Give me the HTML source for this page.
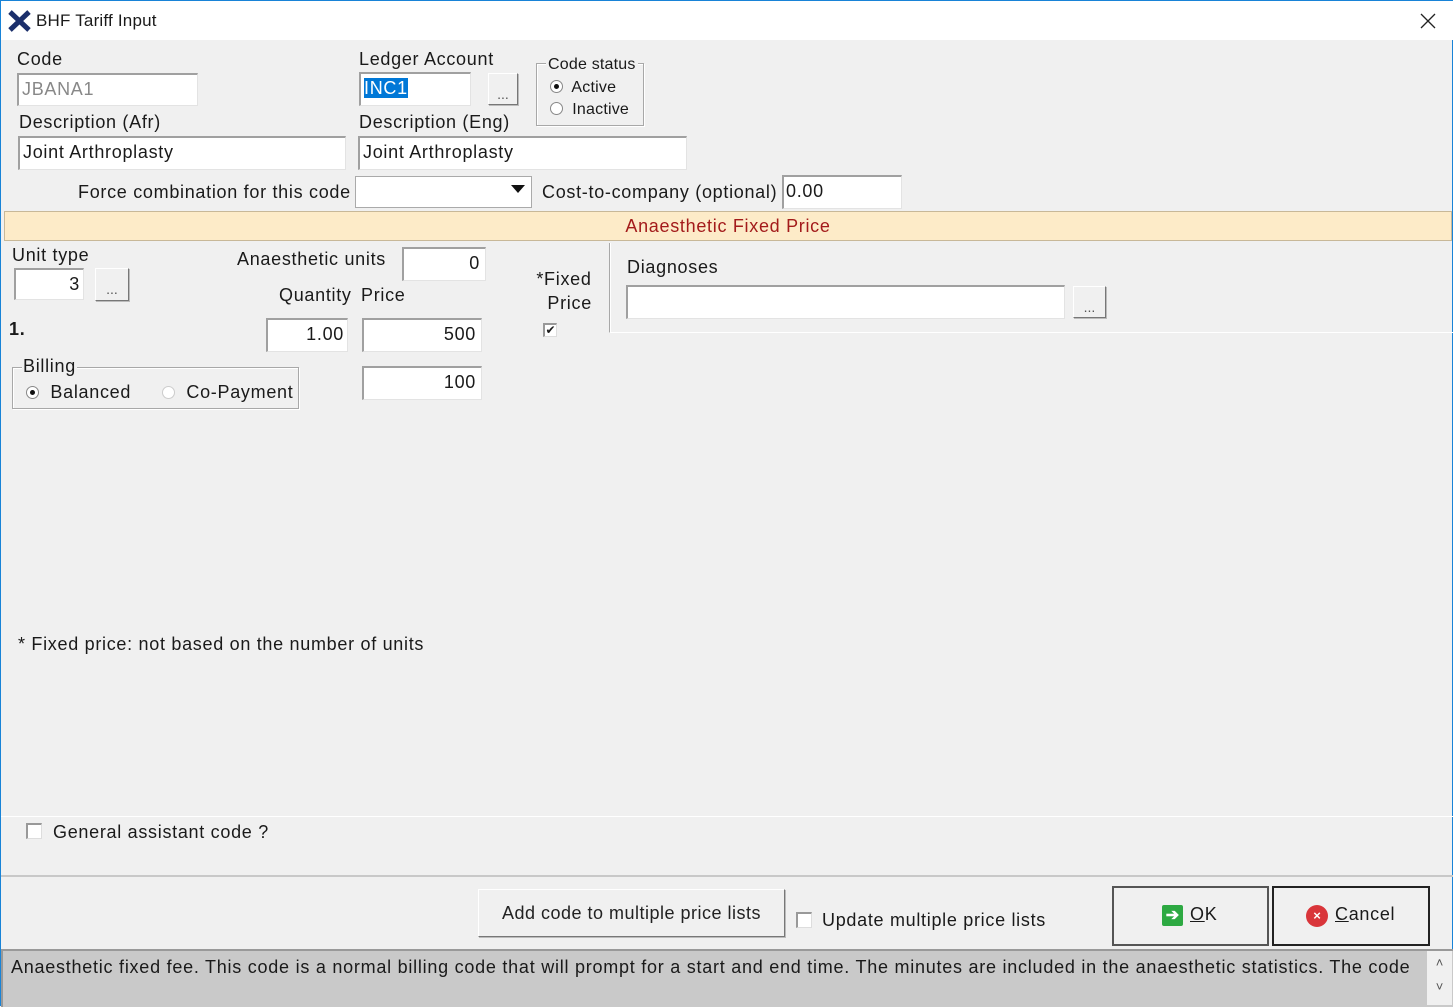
<!DOCTYPE html>
<html><head><meta charset="utf-8"><style>
*{box-sizing:border-box;margin:0;padding:0}
body{width:1453px;height:1006px;background:#f0f0f0;font-family:"Liberation Sans",sans-serif;font-size:18px;letter-spacing:0.7px;color:#1a1a1a;position:relative;overflow:hidden;border:1px solid #1883d7}
.a{position:absolute;white-space:nowrap}
.in{position:absolute;background:#fff;border-top:2px solid #a0a0a0;border-left:2px solid #a0a0a0;border-bottom:1px solid #e3e3e3;border-right:1px solid #e3e3e3;padding:0 3px;line-height:28px}
.r{text-align:right}
.btn{position:absolute;background:#f0f0f0;border:1px solid #fff;border-right-color:#777;border-bottom-color:#777;box-shadow:1px 1px 0 #bbb;text-align:center;color:#555;font-size:14px;letter-spacing:0}
.rad{display:inline-block;width:13px;height:13px;border-radius:50%;border:1px solid #888;background:#fff;vertical-align:-1px;position:relative}
.rad.on:after{content:"";position:absolute;left:3px;top:3px;width:5px;height:5px;border-radius:50%;background:#111}
.cb{position:absolute;width:16px;height:16px;background:#fff;border-top:2px solid #999;border-left:2px solid #999;border-right:1px solid #ddd;border-bottom:1px solid #ddd}
.grp{position:absolute;border:1px solid #a8a8a8;box-shadow:inset 1px 1px 0 #fff,1px 1px 0 #fff}
</style></head><body>
<div class="a" style="left:0;top:0;width:1453px;height:39px;background:#fff"></div>
<svg class="a" style="left:7px;top:9px" width="24" height="22" viewBox="0 0 24 22"><path d="M2 2 L21 20 M21 2 L2 20" stroke="#1b2f6b" stroke-width="5"/></svg>
<div class="a" style="left:35px;top:10px;font-size:17px;letter-spacing:0.2px">BHF Tariff Input</div>
<svg class="a" style="left:1419px;top:12px" width="16" height="16"><path d="M1 1L15 15M15 1L1 15" stroke="#222" stroke-width="1.3"/></svg>

<div class="a" style="left:16px;top:48px">Code</div>
<div class="in" style="left:16px;top:72px;width:181px;height:33px;color:#888">JBANA1</div>
<div class="a" style="left:358px;top:48px">Ledger Account</div>
<div class="in" style="left:358px;top:71px;width:112px;height:34px"><span style="background:#0078d7;color:#fff">INC1</span></div>
<div class="btn" style="left:487px;top:72px;width:30px;height:32px;line-height:40px">...</div>
<div class="grp" style="left:535px;top:62px;width:108px;height:63px"></div>
<div class="a" style="left:545px;top:55px;font-size:16px;letter-spacing:0.2px;background:#f0f0f0;padding:0 2px">Code status</div>
<div class="a" style="left:549px;top:78px;font-size:16px;letter-spacing:0.2px"><span class="rad on"></span>&nbsp; Active</div>
<div class="a" style="left:549px;top:100px;font-size:16px;letter-spacing:0.2px"><span class="rad"></span>&nbsp; Inactive</div>

<div class="a" style="left:18px;top:111px">Description (Afr)</div>
<div class="in" style="left:17px;top:135px;width:328px;height:34px">Joint Arthroplasty</div>
<div class="a" style="left:358px;top:111px">Description (Eng)</div>
<div class="in" style="left:357px;top:135px;width:329px;height:34px">Joint Arthroplasty</div>

<div class="a" style="left:77px;top:181px">Force combination for this code</div>
<div class="a" style="left:354px;top:175px;width:177px;height:32px;background:#fff;border:1px solid #aaa"></div>
<div class="a" style="left:510px;top:184px;width:0;height:0;border-left:7px solid transparent;border-right:7px solid transparent;border-top:8px solid #111"></div>
<div class="a" style="left:541px;top:181px">Cost-to-company (optional)</div>
<div class="in" style="left:781px;top:174px;width:120px;height:34px;line-height:28px;padding-left:2px">0.00</div>

<div class="a" style="left:3px;top:210px;width:1448px;height:30px;background:#fdebc8;border:1px solid #c8b898;color:#a31b1b;text-align:center;line-height:28px">Anaesthetic Fixed Price</div>

<div class="a" style="left:11px;top:244px">Unit type</div>
<div class="in r" style="left:13px;top:267px;width:70px;height:32px">3</div>
<div class="btn" style="left:94px;top:267px;width:34px;height:33px;line-height:40px">...</div>
<div class="a" style="left:236px;top:248px">Anaesthetic units</div>
<div class="in r" style="left:401px;top:246px;width:84px;height:34px;padding-right:5px">0</div>
<div class="a" style="left:278px;top:284px">Quantity</div>
<div class="a" style="left:360px;top:284px">Price</div>
<div class="a" style="left:8px;top:318px;font-weight:bold">1.</div>
<div class="in r" style="left:265px;top:317px;width:82px;height:34px">1.00</div>
<div class="in r" style="left:361px;top:317px;width:120px;height:34px;padding-right:5px">500</div>
<div class="in r" style="left:361px;top:365px;width:120px;height:34px;padding-right:5px">100</div>
<div class="a" style="left:535px;top:266px;text-align:center;line-height:24px">*Fixed<br>&nbsp;&nbsp;Price</div>
<div class="cb" style="left:542px;top:322px;width:14px;height:14px;font-size:12px;line-height:11px;text-align:center;letter-spacing:0">✔</div>

<div class="grp" style="left:11px;top:366px;width:287px;height:42px"></div>
<div class="a" style="left:21px;top:355px;background:#f0f0f0;padding:0 1px">Billing</div>
<div class="a" style="left:25px;top:381px"><span class="rad on"></span>&nbsp; Balanced</div>
<div class="a" style="left:161px;top:381px"><span class="rad" style="border-color:#ccc"></span>&nbsp; Co-Payment</div>

<div class="a" style="left:608px;top:242px;width:845px;height:90px;border-left:1px solid #a8a8a8;border-bottom:1px solid #fff;box-shadow:inset 1px 0 0 #fff"></div>
<div class="a" style="left:626px;top:256px">Diagnoses</div>
<div class="in" style="left:625px;top:284px;width:439px;height:34px"></div>
<div class="btn" style="left:1072px;top:285px;width:33px;height:32px;line-height:40px">...</div>

<div class="a" style="left:17px;top:633px">* Fixed price: not based on the number of units</div>

<div class="a" style="left:0;top:815px;width:1453px;height:1px;background:#fff"></div>
<div class="cb" style="left:25px;top:822px"></div>
<div class="a" style="left:52px;top:821px">General assistant code ?</div>
<div class="a" style="left:0;top:874px;width:1453px;height:2px;background:#c8c8c8"></div>

<div class="btn" style="left:477px;top:888px;width:307px;height:48px;color:#222;font-size:18px;letter-spacing:0.5px;line-height:46px">Add code to multiple price lists</div>
<div class="cb" style="left:795px;top:911px"></div>
<div class="a" style="left:821px;top:909px">Update multiple price lists</div>
<div class="a" style="left:1111px;top:885px;width:157px;height:60px;border:2px solid #555;background:#f0f0f0"></div>
<div class="a" style="left:1161px;top:904px;width:21px;height:21px;background:#2da942;border-radius:2px;color:#fff;font-weight:bold;font-size:16px;line-height:21px;text-align:center;letter-spacing:0">➔</div>
<div class="a" style="left:1189px;top:903px"><u>O</u>K</div>
<div class="a" style="left:1271px;top:885px;width:158px;height:60px;border:2px solid #222;background:#f0f0f0"></div>
<div class="a" style="left:1305px;top:904px;width:22px;height:22px;background:#d9353a;border-radius:50%;color:#fff;font-size:13px;line-height:22px;text-align:center;font-weight:bold;letter-spacing:0">×</div>
<div class="a" style="left:1334px;top:903px"><u>C</u>ancel</div>

<div class="a" style="left:0;top:948px;width:1453px;height:58px;background:#c9c9c9;border-top:2px solid #999;border-left:2px solid #999"></div>
<div class="a" style="left:1426px;top:950px;width:25px;height:54px;background:#f0f0f0;color:#555;font-size:13px;text-align:center;line-height:24px;letter-spacing:0">˄<br>˅</div>
<div class="a" style="left:10px;top:956px;letter-spacing:0.75px">Anaesthetic fixed fee. This code is a normal billing code that will prompt for a start and end time. The minutes are included in the anaesthetic statistics. The code</div>
</body></html>
